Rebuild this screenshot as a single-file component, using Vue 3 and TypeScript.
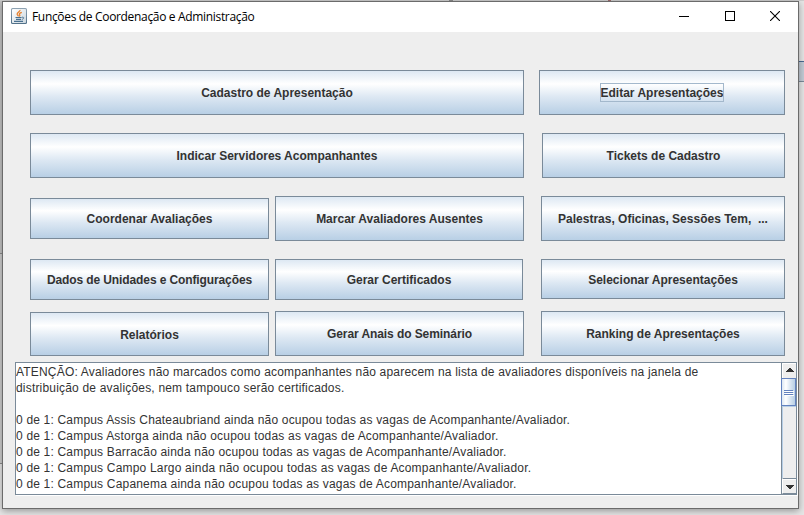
<script setup lang="ts">
interface ActionButton {
  label: string
  kind: string
  focused?: boolean
}

const rows: { id: string; buttons: ActionButton[] }[] = [
  {
    id: 'r1',
    buttons: [
      { label: 'Cadastro de Apresentação', kind: 'wide' },
      { label: 'Editar Apresentações', kind: 'side-246', focused: true },
    ],
  },
  {
    id: 'r2',
    buttons: [
      { label: 'Indicar Servidores Acompanhantes', kind: 'wide' },
      { label: 'Tickets de Cadastro', kind: 'side-243' },
    ],
  },
  {
    id: 'r3',
    buttons: [
      { label: 'Coordenar Avaliações', kind: 'first short' },
      { label: 'Marcar Avaliadores Ausentes', kind: 'middle' },
      { label: 'Palestras, Oficinas, Sessões Tem,\u00a0 ...', kind: 'side' },
    ],
  },
  {
    id: 'r4',
    buttons: [
      { label: 'Dados de Unidades e Configurações', kind: 'first dense' },
      { label: 'Gerar Certificados', kind: 'middle narrow' },
      { label: 'Selecionar Apresentações', kind: 'side shorter' },
    ],
  },
  {
    id: 'r5',
    buttons: [
      { label: 'Relatórios', kind: 'first lowered' },
      { label: 'Gerar Anais do Seminário', kind: 'middle snug' },
      { label: 'Ranking de Apresentações', kind: 'side' },
    ],
  },
]

const campuses = ['Assis Chateaubriand', 'Astorga', 'Barracão', 'Campo Largo', 'Capanema']
const lines: string[] = [
  'ATENÇÃO: Avaliadores não marcados como acompanhantes não aparecem na lista de avaliadores disponíveis na janela de',
  'distribuição de avalições, nem tampouco serão certificados.',
  '',
  ...campuses.map(
    (c) => `0 de 1: Campus ${c} ainda não ocupou todas as vagas de Acompanhante/Avaliador.`,
  ),
]
</script>

<template>
  <div class="desktop">
    <i class="mark left-a"></i>
    <i class="mark left-b"></i>
    <i class="mark right-a"></i>
    <i class="mark top-a"></i>
    <i class="mark top-b"></i>
    <i class="mark top-c"></i>
    <section class="window">
      <header class="titlebar">
        <svg class="java" width="16" height="16" viewBox="0 0 16 16">
          <defs>
            <linearGradient id="jbg" x1="0" y1="0" x2="0" y2="1">
              <stop offset="0" stop-color="#8fa3b3" />
              <stop offset="1" stop-color="#4f6f88" />
            </linearGradient>
            <linearGradient id="jin" x1="0" y1="0" x2="1" y2="1">
              <stop offset="0" stop-color="#ffffff" />
              <stop offset="1" stop-color="#ccd7df" />
            </linearGradient>
          </defs>
          <rect x="0" y="0" width="16" height="16" rx="1.5" fill="url(#jbg)" />
          <rect x="1" y="1" width="14" height="14" rx="0.8" fill="url(#jin)" />
          <path d="M9 2C9.4 3.6 5.6 4.4 6.2 6.2C6.5 7 7.4 7.4 7.2 8.4M10.8 4.3C9.1 4.8 7.9 5.6 8.6 6.6C9.1 7.3 8.8 7.9 8.3 8.5" fill="none" stroke="#e8802c" stroke-width="1.3" />
          <path d="M4.5 9.5H10.6M5 11.4H10M3 13.4H12" fill="none" stroke="#49708f" stroke-width="1.1" />
          <path d="M11 9.2C13.4 8.6 13.2 11 10.9 11.4" fill="none" stroke="#49708f" stroke-width="0.9" />
        </svg>
        <h1>Funções de Coordenação e Administração</h1>
        <div class="controls">
          <svg width="10" height="10" viewBox="0 0 10 10"><path d="M0 5.5H10" stroke="#000" /></svg>
          <svg width="10" height="10" viewBox="0 0 10 10"><rect x=".5" y=".5" width="9" height="9" fill="none" stroke="#000" /></svg>
          <svg width="10" height="10" viewBox="0 0 10 10"><path d="M0 0L10 10M10 0L0 10" stroke="#000" stroke-width="1.1" /></svg>
        </div>
      </header>

      <main>
        <div v-for="row in rows" :key="row.id" class="row" :class="row.id">
          <button v-for="b in row.buttons" :key="b.label" type="button" :class="b.kind">
            <span :class="{ focused: b.focused }">{{ b.label }}</span>
          </button>
        </div>

        <div class="scrollpane">
          <div class="text">
            <p v-for="(line, i) in lines" :key="i">{{ line }}</p>
          </div>
          <div class="scrollbar">
            <div class="arrow up">
              <svg width="8" height="4" viewBox="0 0 8 4" shape-rendering="crispEdges"><path d="M3 0H5V1H6V2H7V3H8V4H0V3H1V2H2V1H3Z" fill="#333" /></svg>
            </div>
            <div class="thumb"><i></i><i></i><i></i></div>
            <div class="track"></div>
            <div class="arrow down">
              <svg width="8" height="4" viewBox="0 0 8 4" shape-rendering="crispEdges"><path d="M0 0H8V1H7V2H6V3H5V4H3V3H2V2H1V1H0Z" fill="#333" /></svg>
            </div>
          </div>
        </div>
      </main>
    </section>
  </div>
</template>

<style>
body {
  overflow: hidden;
}
</style>

<style scoped>
.desktop {
  position: relative;
  box-sizing: border-box;
  width: 804px;
  height: 515px;
  padding: 1px 5px 6px 2px;
  overflow: hidden;
  background: #e6e6e6;
  font-family: "Liberation Sans", Arial, sans-serif;
}
.mark {
  position: absolute;
}
.left-a {
  left: 0;
  top: 0;
  width: 2px;
  height: 253px;
  background: #c4c4c4;
  border-bottom: 1px solid #8c8c8c;
}
.left-b {
  left: 0;
  top: 254px;
  width: 2px;
  height: 209px;
  background: #cfcfcf;
  border-bottom: 1px solid #8c8c8c;
}
.right-a {
  left: 799px;
  top: 61px;
  width: 5px;
  height: 19px;
  background: #c3ccd6;
  border-top: 1px solid #4a6a92;
  border-bottom: 1px solid #7a8a99;
}
.top-a {
  left: 0;
  top: 0;
  width: 804px;
  height: 1px;
  background: #cfcfcf;
}
.top-b {
  left: 608px;
  top: 0;
  width: 3px;
  height: 1px;
  background: #a06c6c;
}
.top-c {
  left: 449px;
  top: 0;
  width: 4px;
  height: 1px;
  background: #8a8a8a;
}
.window {
  position: relative;
  box-sizing: border-box;
  width: 797px;
  height: 508px;
  border: 1px solid #6b6b6b;
  background: #eee;
  box-shadow: 0 2px 7px rgba(0, 0, 0, 0.35);
}
.titlebar {
  display: flex;
  align-items: center;
  height: 30px;
  box-sizing: border-box;
  padding: 0 18px 2px 8px;
  background: #fff;
}
.java {
  flex: none;
}
h1 {
  margin: 1px auto 0 5px;
  font: 400 12px/16px "Open Sans", "Noto Sans", sans-serif;
  letter-spacing: -0.33px;
  white-space: nowrap;
  color: #000;
}
.controls {
  display: flex;
  gap: 35.5px;
}
.controls svg {
  display: block;
}
main {
  padding: 38px 0 0 12px;
}
.row {
  display: flex;
  align-items: flex-start;
  height: 45px;
  margin: 0 13px 18px 15px;
}
.r4 {
  height: 41px;
  margin-bottom: 11px;
}
.r5 {
  margin-bottom: 6px;
}
button {
  box-sizing: border-box;
  display: flex;
  align-items: center;
  justify-content: center;
  height: 100%;
  margin: 0;
  padding: 0;
  border: 1px solid #7a8a99;
  background: linear-gradient(#dde8f3 0%, #fff 30%, #dde8f3 60%, #b8cfe5 100%);
  color: #333;
  font: bold 12px/15px "Liberation Sans", Arial, sans-serif;
  white-space: nowrap;
}
button span {
  padding-top: 2px;
}
.wide {
  width: 494px;
}
.side-246,
.side-243,
.side {
  width: 244px;
  margin-left: auto;
}
.side-246 {
  width: 246px;
}
.side-243 {
  width: 243px;
}
.first {
  width: 239px;
}
.middle {
  width: 249px;
  margin-left: 6px;
}
.narrow {
  width: 248px;
}
.short {
  height: 41px;
  margin-top: 2px;
}
.shorter {
  height: 40px;
}
.lowered {
  height: 44px;
  margin-top: 1px;
}
.dense {
  letter-spacing: -0.11px;
}
.snug {
  letter-spacing: -0.08px;
}
.focused {
  outline: 1px solid #a3b8cc;
}
.scrollpane {
  display: flex;
  box-sizing: border-box;
  width: 782px;
  height: 133px;
  border: 1px solid #7a8a99;
  box-shadow: 1px 1px 0 #fff;
  background: #fff;
}
.text {
  flex: 1;
  min-width: 0;
  padding-top: 1px;
  overflow: hidden;
}
p {
  margin: 0;
  height: 16px;
  font-size: 12px;
  line-height: 16px;
  letter-spacing: 0.185px;
  white-space: nowrap;
  color: #333;
}
.scrollbar {
  box-sizing: border-box;
  display: flex;
  flex-direction: column;
  width: 15px;
  border-left: 1px solid #7a8a99;
  background: #eee;
}
.arrow {
  box-sizing: border-box;
  display: flex;
  justify-content: center;
  height: 15px;
  border-left: 1px solid #fff;
  border-top: 1px solid #fff;
}
.arrow svg {
  display: block;
}
.up svg {
  margin-top: 4px;
}
.thumb {
  box-sizing: border-box;
  display: flex;
  flex-direction: column;
  align-items: center;
  gap: 1px;
  height: 28px;
  margin-left: -1px;
  padding-top: 11px;
  border: 1px solid #6382bf;
  background: linear-gradient(90deg, #dde8f3, #fff 30%, #dde8f3 60%, #b8cfe5);
}
.thumb i {
  width: 9px;
  height: 1px;
  background: #6382bf;
  box-shadow: 1px 1px 0 #fff;
}
.track {
  flex: 1;
  border-left: 1px solid #b8cfe5;
  border-top: 1px solid #b8cfe5;
}
.down {
  height: 16px;
  border-top: 1px solid #7a8a99;
  border-bottom: 1px solid #7a8a99;
  box-shadow: inset 0 1px 0 #fff;
}
.down svg {
  margin-top: 6px;
}
</style>
